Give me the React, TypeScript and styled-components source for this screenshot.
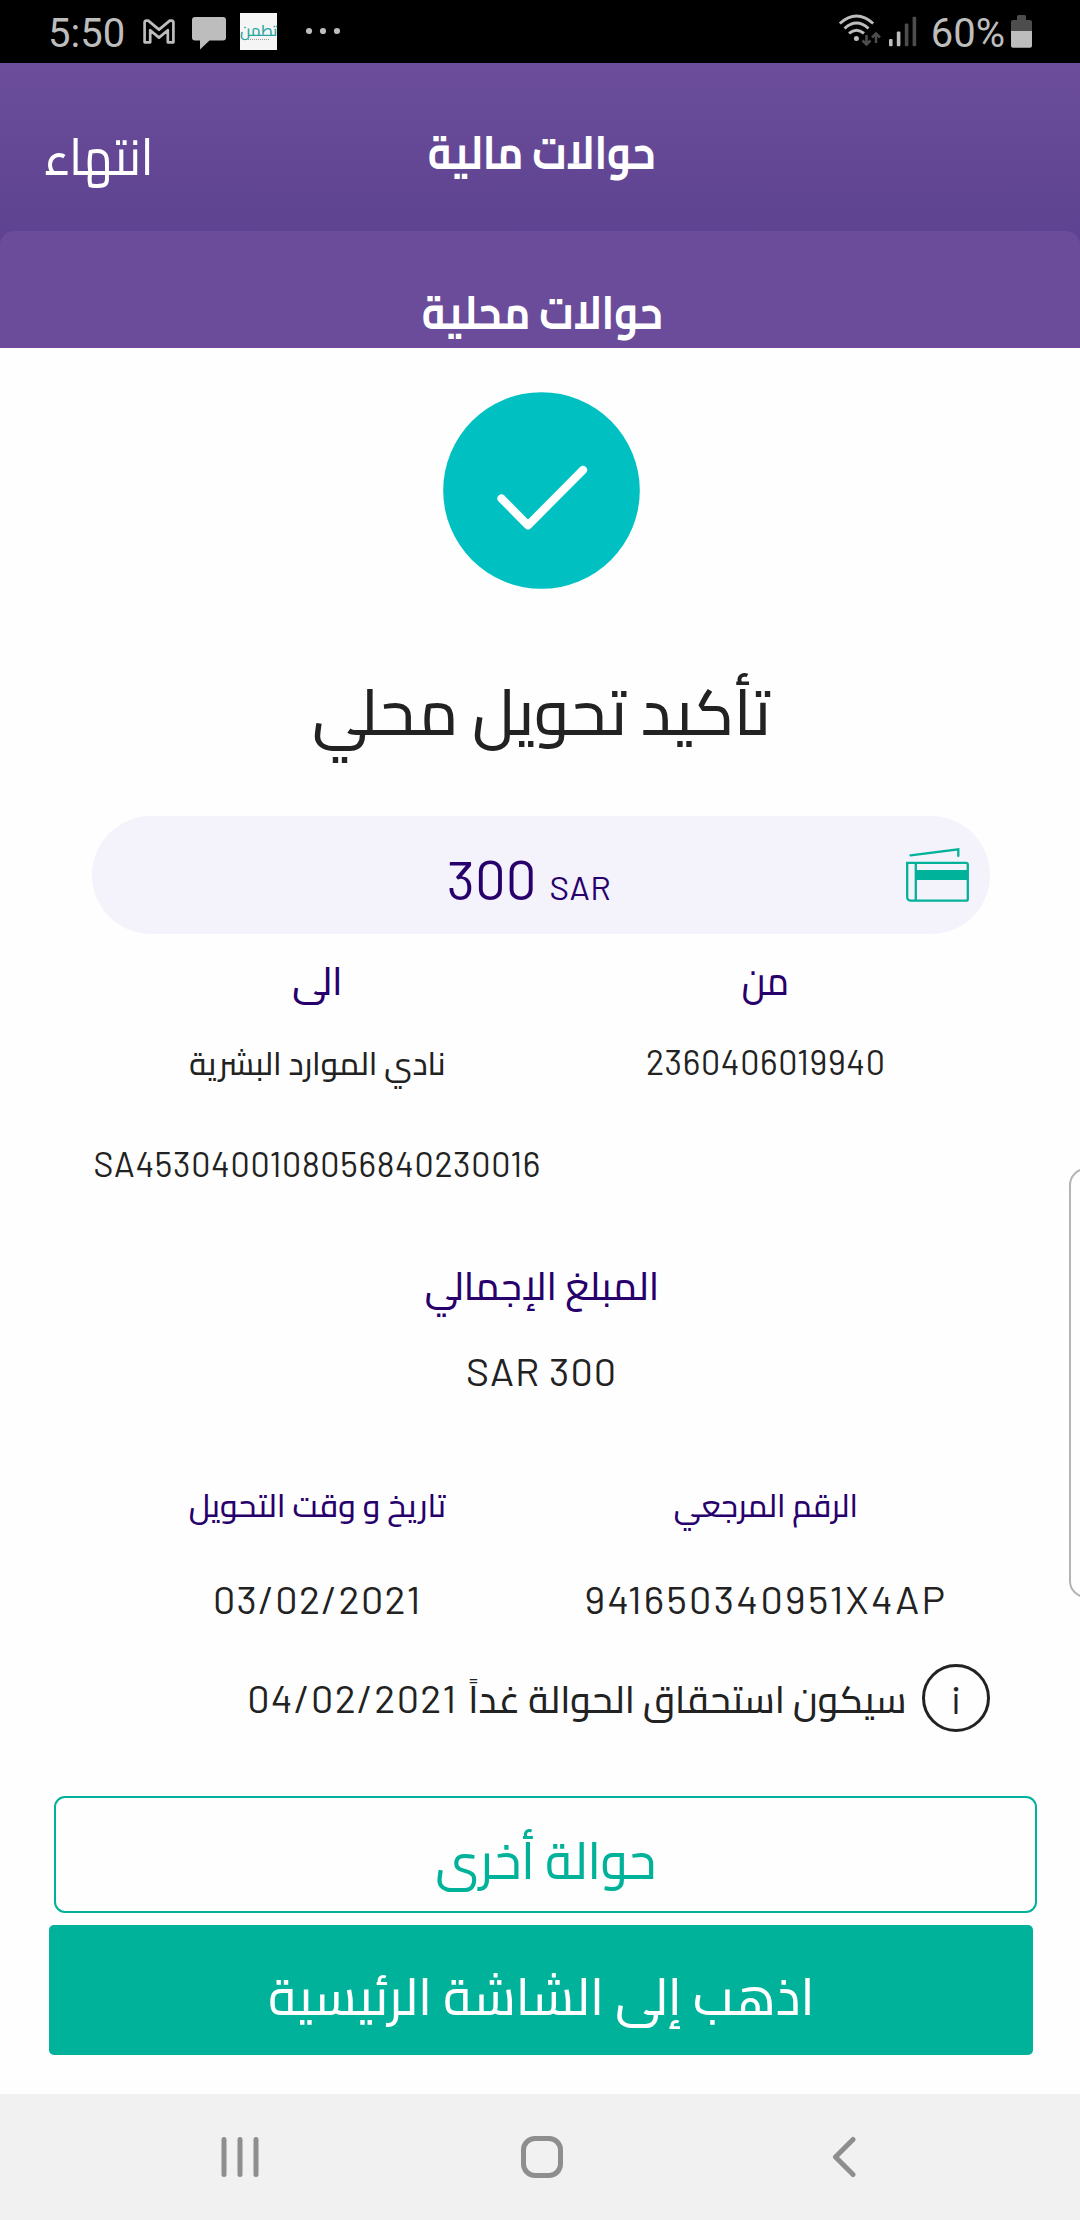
import React from "react";
import styled, { createGlobalStyle } from "styled-components";

const arabic = `Cairo, "Noto Sans Arabic", "DejaVu Sans", sans-serif`;
const latin = `Barlow, Roboto, "Liberation Sans", sans-serif`;
const system = `Roboto, "Noto Sans", sans-serif`;

const color = {
  ink: "#222222",
  indigo: "#27006b",
  teal: "#00b299",
  lilac: "#f4f2fb",
  status: "#bdbdbd",
  statusDim: "#4d4d4d",
  nav: "#8e8e8e",
};

const GlobalStyle = createGlobalStyle`
  *, *::before, *::after { box-sizing: border-box; }
  body { margin: 0; background: #fefefe; }
`;

const Screen = styled.div`
  position: relative;
  display: flex;
  flex-direction: column;
  width: 1080px;
  height: 2220px;
  overflow: hidden;
  background: #fefefe;
  color: ${color.ink};
`;

const StatusBar = styled.div`
  display: flex;
  justify-content: space-between;
  height: 63px;
  padding: 0 48px;
  background: #000;
`;

const StatusGroup = styled.div`
  display: flex;
  align-items: center;
  svg { display: block; }
`;

const StatusIcon = styled.svg<{ $indent?: number }>`
  flex: none;
  height: 63px;
  margin-left: ${(p) => p.$indent ?? 0}px;
`;

const StatusText = styled.span<{ $indent?: number }>`
  padding-top: 4px;
  margin-left: ${(p) => p.$indent ?? 0}px;
  font: 400 40px/56px ${system};
  color: ${color.status};
`;

const AppBadge = styled.div`
  display: flex;
  flex-direction: column;
  align-items: center;
  width: 37px;
  height: 37px;
  margin: 0 29px 0 14px;
  padding-top: 9px;
  background: #f5f5f5;
  color: #2aa6a2;
  font: 600 15.2px/18px ${arabic};
  white-space: nowrap;

  &::after {
    content: "";
    width: 21px;
    margin-top: -1px;
    border-top: 1px dotted #999;
  }
`;

const Header = styled.header`
  display: flex;
  flex-direction: column;
  height: 285px;
  background: linear-gradient(#6b4d9b, #5c4290 190px);
  color: #fff;
`;

const HeaderBar = styled.div`
  display: grid;
  grid-template-columns: 1fr auto 1fr;
  align-items: center;
  height: 168px;
  padding: 0 41px 0 44px;
`;

const Sheet = styled.div`
  display: flex;
  flex: 1;
  align-items: center;
  justify-content: center;
  padding: 45px 0 0 4px;
  border-radius: 14px 14px 0 0;
  background: #6a4c9a;
`;

const Title = styled.h1<{ $drop?: number }>`
  margin: 0;
  padding-top: ${(p) => p.$drop ?? 0}px;
  font: 700 47px/60px ${arabic};
  white-space: nowrap;
  transform: scaleX(0.865);
`;

const DoneButton = styled.button`
  justify-self: start;
  padding: 19px 0 0;
  border: 0;
  background: none;
  color: inherit;
  font: 500 51px/60px ${arabic};
  transform: scaleX(0.905);
  transform-origin: left;
`;

const Receipt = styled.main`
  display: flex;
  flex-direction: column;
  height: 1384px;
  padding: 44px 90px 0 92px;
`;

const SuccessMark = styled.svg`
  align-self: center;
  flex: none;
  width: 197px;
  height: 197px;
`;

const Heading = styled.h2`
  margin: 73px 0 0;
  padding-left: 1px;
  font: 500 64px/100px ${arabic};
  text-align: center;
  transform: scaleX(0.985);
`;

const AmountPill = styled.div`
  display: flex;
  align-items: center;
  height: 118px;
  margin-top: 54px;
  padding: 0 21px 0 60px;
  border-radius: 59px;
  background: ${color.lilac};
  color: ${color.indigo};
`;

const Amount = styled.div`
  display: flex;
  flex: 1;
  align-items: baseline;
  justify-content: center;
  gap: 13px;
  padding-top: 14px;
`;

const Figure = styled.span<{ $size: number; $track?: number }>`
  font: 400 ${(p) => p.$size}px/50px ${latin};
  letter-spacing: ${(p) => p.$track ?? 0}px;
  white-space: nowrap;
`;

const Label = styled.span<{ $size: number; $squeeze?: number }>`
  font: 500 ${(p) => p.$size}px/50px ${arabic};
  white-space: nowrap;
  transform: scaleX(${(p) => p.$squeeze ?? 1});
`;

const Pair = styled.div<{ $gap: number; $tint?: boolean }>`
  display: grid;
  grid-template-columns: 1fr 1fr;
  align-items: baseline;
  justify-items: center;
  height: 50px;
  margin-top: ${(p) => p.$gap}px;
  padding-left: 1px;
  color: ${(p) => (p.$tint ? color.indigo : color.ink)};
`;

const Single = styled.div<{ $gap: number; $tint?: boolean }>`
  display: flex;
  justify-content: center;
  height: 50px;
  margin-top: ${(p) => p.$gap}px;
  padding-left: 1px;
  color: ${(p) => (p.$tint ? color.indigo : color.ink)};
`;

const Notice = styled.div`
  display: flex;
  align-items: center;
  direction: rtl;
  height: 68px;
  margin-top: 41px;
`;

const InfoBadge = styled.div`
  display: flex;
  align-items: center;
  justify-content: center;
  flex: none;
  width: 68px;
  height: 68px;
  border: 3px solid ${color.ink};
  border-radius: 50%;
`;

const NoticeText = styled.div`
  display: flex;
  align-items: baseline;
  gap: 5px;
  margin-right: 9px;
`;

const Actions = styled.div`
  display: flex;
  flex-direction: column;
  flex: 1;
  gap: 12px;
  padding: 64px 43px 0 49px;
`;

const ActionButton = styled.button`
  display: flex;
  align-items: center;
  justify-content: center;
  font: 500 51.4px/70px ${arabic};
`;

const OutlineButton = styled(ActionButton)`
  height: 117px;
  margin-left: 5px;
  padding: 11px 0 0;
  border: 2px solid ${color.teal};
  border-radius: 11px;
  background: #fefefe;
  color: ${color.teal};
`;

const FilledButton = styled(ActionButton)`
  height: 130px;
  margin-right: 4px;
  padding: 12px 0 0;
  border: 0;
  border-radius: 5px;
  background: ${color.teal};
  color: #fff;
`;

const ButtonText = styled.span<{ $squeeze: number }>`
  transform: scaleX(${(p) => p.$squeeze});
`;

const NavBar = styled.nav`
  display: grid;
  grid-template-columns: repeat(3, 302px);
  place-items: center;
  height: 126px;
  padding-left: 89px;
  background: #f1f1f1;
  svg { display: block; fill: none; stroke: ${color.nav}; stroke-linecap: round; }
`;

const EdgePanel = styled.div`
  position: absolute;
  top: 1168px;
  left: 1069px;
  width: 40px;
  height: 430px;
  border: 2px solid #b4b4b4;
  border-radius: 17px;
`;

const GmailIcon = () => (
  <StatusIcon $indent={17} width="34" viewBox="142 0 34 63">
    <path
      d="M144.6 42.3V22.6q0-2 2-2h1.6L159 29.6l10.8-9h1.6q2 0 2 2v19.7h-5.6V30.2L159 37.6l-8.8-7.4v12.1z"
      fill="none"
      stroke={color.status}
      strokeWidth="2.7"
      strokeLinejoin="round"
    />
  </StatusIcon>
);

const ChatIcon = () => (
  <StatusIcon $indent={16} width="34" viewBox="192 0 34 63">
    <path d="M195 17h28q3 0 3 3v17.5q0 3-3 3h-13.5L200 49.5V40.500h-5q-3 0-3-3V20q0-3 3-3z" fill={color.status} />
  </StatusIcon>
);

const MoreDots = () => (
  <StatusIcon width="34" viewBox="306 0 34 63" fill={color.status}>
    <circle cx="309" cy="31" r="3.1" />
    <circle cx="323" cy="31" r="3.1" />
    <circle cx="337" cy="31" r="3.1" />
  </StatusIcon>
);

const WifiIcon = () => (
  <StatusIcon width="43" viewBox="838 0 43 63" fill="none" stroke={color.status} strokeWidth="2.9">
    <path d="M839.8 23.5Q856.5 8.5 873.2 23.5" />
    <path d="M844.5 28.5Q856.5 17.5 868.5 28.5" />
    <path d="M849 33.3Q856.5 27 864 33.3" />
    <circle cx="856.4" cy="38.5" r="2.5" fill={color.status} stroke="none" />
    <g stroke={color.statusDim} strokeWidth="2.5">
      <path d="M866.5 35v9.500M862.500 40.500l4 4 4-4" />
      <path d="M876 43v-9.500M872 37.500l4-4 4 4" />
    </g>
  </StatusIcon>
);

const SignalIcon = () => (
  <StatusIcon $indent={8} width="28" viewBox="889 0 28 63">
    <rect x="889" y="39" width="3.6" height="7.3" rx="1" fill={color.status} />
    <rect x="896.8" y="31.6" width="3.6" height="14.7" rx="1" fill={color.status} />
    <rect x="904.8" y="23.6" width="3.6" height="22.7" rx="1" fill={color.statusDim} />
    <rect x="912.6" y="16.8" width="3.6" height="29.5" rx="1" fill={color.statusDim} />
  </StatusIcon>
);

const BatteryIcon = () => (
  <StatusIcon $indent={6} width="21" viewBox="1011 0 21 63">
    <path d="M1017 20v-3.500q0-1.500 1.500-1.500h6q1.500 0 1.500 1.500V20h4q2 0 2 2v9h-21v-9q0-2 2-2z" fill={color.statusDim} />
    <path d="M1011 31h21v14.800q0 2-2 2h-17q-2 0-2-2z" fill={color.status} />
  </StatusIcon>
);

const CardsIcon = () => (
  <svg width="63" height="56" viewBox="906 847 63 56" fill="none" stroke={color.teal} strokeWidth="2.3">
    <path d="M910.5 855.4l47.8-6.100v6.600" strokeLinecap="round" />
    <path d="M907.2 862.8h58.800q1.800 0 1.800 1.800v34.300q0 1.800-1.800 1.800h-54.800q-4 0-4-4z" />
    <path d="M915.8 862.8v37.900" />
    <path d="M915.8 870h52v10h-52z" fill={color.teal} stroke="none" />
  </svg>
);

export default function App() {
  return (
    <Screen>
      <GlobalStyle />
      <StatusBar>
        <StatusGroup>
          <StatusText>5:50</StatusText>
          <GmailIcon />
          <ChatIcon />
          <AppBadge lang="ar">تطمن</AppBadge>
          <MoreDots />
        </StatusGroup>
        <StatusGroup>
          <WifiIcon />
          <SignalIcon />
          <StatusText $indent={14}>60%</StatusText>
          <BatteryIcon />
        </StatusGroup>
      </StatusBar>

      <Header lang="ar">
        <HeaderBar>
          <DoneButton>انتهاء</DoneButton>
          <Title $drop={10}>حوالات مالية</Title>
        </HeaderBar>
        <Sheet>
          <Title>حوالات محلية</Title>
        </Sheet>
      </Header>

      <Receipt lang="ar">
        <SuccessMark viewBox="0 0 197 197">
          <circle cx="98.5" cy="98.5" r="98.3" fill="#00c0c1" />
          <path
            d="M58.5 106.5L85 133.3L140 78"
            fill="none"
            stroke="#fff"
            strokeWidth="8.2"
            strokeLinecap="round"
            strokeLinejoin="round"
          />
        </SuccessMark>
        <Heading>تأكيد تحويل محلي</Heading>

        <AmountPill>
          <Amount>
            <Figure $size={54.5}>300</Figure>
            <Figure $size={33.5} $track={0.4}>SAR</Figure>
          </Amount>
          <CardsIcon />
        </AmountPill>

        <Pair $gap={22} $tint>
          <Label $size={39} $squeeze={0.99}>الى</Label>
          <Label $size={39} $squeeze={0.9}>من</Label>
        </Pair>
        <Pair $gap={31}>
          <Label $size={32} $squeeze={0.975}>نادي الموارد البشرية</Label>
          <Figure $size={34} $track={0.65}>2360406019940</Figure>
        </Pair>
        <Pair $gap={52}>
          <Figure $size={34} $track={0.7}>SA4530400108056840230016</Figure>
        </Pair>

        <Single $gap={72} $tint>
          <Label $size={39} $squeeze={0.97}>المبلغ الإجمالي</Label>
        </Single>
        <Single $gap={34}>
          <Figure $size={39.5} $track={1}>SAR 300</Figure>
        </Single>

        <Pair $gap={85} $tint>
          <Label $size={32} $squeeze={0.995}>تاريخ و وقت التحويل</Label>
          <Label $size={32} $squeeze={0.96}>الرقم المرجعي</Label>
        </Pair>
        <Pair $gap={43}>
          <Figure $size={39.5} $track={1.3}>03/02/2021</Figure>
          <Figure $size={39.5} $track={2.3}>941650340951X4AP</Figure>
        </Pair>

        <Notice>
          <InfoBadge>
            <Figure $size={39.5}>i</Figure>
          </InfoBadge>
          <NoticeText>
            <Label $size={38} $squeeze={0.972}>سيكون استحقاق الحوالة غداً</Label>
            <Figure dir="ltr" $size={39.5} $track={1.3}>04/02/2021</Figure>
          </NoticeText>
        </Notice>
      </Receipt>

      <Actions lang="ar">
        <OutlineButton>
          <ButtonText $squeeze={0.945}>حوالة أخرى</ButtonText>
        </OutlineButton>
        <FilledButton>
          <ButtonText $squeeze={0.992}>اذهب إلى الشاشة الرئيسية</ButtonText>
        </FilledButton>
      </Actions>

      <NavBar>
        <svg width="40" height="42" viewBox="0 0 40 42" strokeWidth="5">
          <path d="M4 3.5v35M20 3.5v35M36 3.5v35" />
        </svg>
        <svg width="42" height="42" viewBox="0 0 42 42" strokeWidth="5">
          <rect x="2.5" y="2.5" width="37" height="37" rx="11.5" />
        </svg>
        <svg width="24" height="42" viewBox="0 0 24 42" strokeWidth="5" strokeLinejoin="round">
          <path d="M21 3.5L3.5 21L21 38.5" />
        </svg>
      </NavBar>

      <EdgePanel />
    </Screen>
  );
}
